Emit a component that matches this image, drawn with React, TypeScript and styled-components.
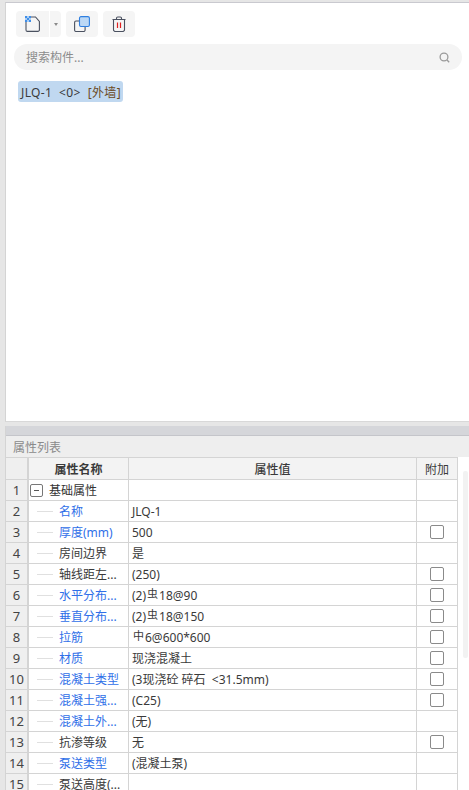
import React from 'react';
import styled, { createGlobalStyle } from 'styled-components';

const GlobalStyle = createGlobalStyle`
  html, body {
    margin: 0;
    padding: 0;
    background: #fff;
    overflow: hidden;
    font-family: "Noto Sans", "Noto Sans CJK SC", sans-serif;
    font-size: 12px;
    color: #333;
  }
`;

const Page = styled.div`
  width: 469px;
  height: 790px;
  overflow: hidden;
  display: flex;
  flex-direction: column;
  background: #e6e6e6;
  padding: 2px 0 0 5px;
  box-sizing: border-box;
`;

const TopPanel = styled.section`
  height: 420px;
  flex: none;
  background: #fff;
  border-top: 1px solid #c9c9cf;
  border-left: 1px solid #d4d4d4;
  border-bottom: 1px solid #d8d8d8;
  padding: 8px 7px 0 8px;
  box-sizing: border-box;
`;

const Toolbar = styled.div`
  display: flex;
  gap: 5px;
  height: 26px;
  margin-left: 2px;
`;

const ToolButton = styled.button`
  width: 32px;
  height: 26px;
  padding: 0;
  border: 0;
  border-radius: 4px;
  background: #f5f5f5;
  display: flex;
  align-items: center;
  justify-content: center;
`;

const SplitButton = styled.div`
  display: flex;
  width: 45px;
  height: 26px;
  border-radius: 4px;
  background: #f5f5f5;
  overflow: hidden;
`;

const SplitMain = styled.div`
  width: 33px;
  display: flex;
  align-items: center;
  justify-content: center;
  border-right: 1px solid #fff;
`;

const SplitArrow = styled.div`
  flex: 1;
  display: flex;
  align-items: center;
  justify-content: center;
`;

const Caret = styled.span`
  width: 0;
  height: 0;
  border-left: 2.5px solid transparent;
  border-right: 2.5px solid transparent;
  border-top: 3px solid #8a8a8a;
`;

const SearchBar = styled.div`
  margin-top: 7px;
  height: 26px;
  width: 448px;
  border-radius: 13px;
  background: #f4f4f4;
  display: flex;
  align-items: center;
  justify-content: space-between;
  padding: 0 12px 0 12px;
  box-sizing: border-box;
  color: #8c8c8c;
`;

const TagRow = styled.div`
  margin-top: 11px;
  margin-left: 4px;
  display: flex;
`;

const Tag = styled.span`
  display: inline-flex;
  align-items: center;
  width: 105px;
  height: 21px;
  padding: 1px 3px 0;
  box-sizing: border-box;
  border-radius: 3px;
  background: #c0d8f0;
  color: #3a3a3a;
  white-space: pre;
  letter-spacing: 0.35px;
`;

const Bracket = styled.span`
  color: #6b4a1e;
`;

const Splitter = styled.div`
  height: 4px;
  flex: none;
`;

const BottomPanel = styled.section`
  flex: 1;
  background: #fff;
  border-left: 1px solid #d4d4d4;
  display: flex;
  flex-direction: column;
  min-height: 0;
`;

const Band = styled.div`
  height: 10px;
  flex: none;
  background: #d5d6da;
  border-bottom: 1px solid #c4c5ca;
  box-sizing: border-box;
`;

const PanelTitle = styled.div`
  height: 21px;
  flex: none;
  background: #eeeeee;
  color: #8a8a8a;
  display: flex;
  align-items: center;
  padding-left: 7px;
`;

const TableWrap = styled.div`
  display: flex;
  flex: 1;
  min-height: 0;
`;

const Table = styled.div`
  width: 452px;
  flex: none;
  display: grid;
  grid-template-columns: 23px 100px 288px 41px;
  grid-template-rows: 22px;
  grid-auto-rows: 21px;
  border-top: 1px solid #d4d4d4;
`;

const Cell = styled.div`
  border-right: 1px solid #d4d4d4;
  border-bottom: 1px solid #d4d4d4;
  box-sizing: border-box;
  display: flex;
  align-items: center;
  white-space: pre;
  overflow: hidden;
  min-width: 0;
`;

const IndexCell = styled(Cell)`
  background: #efefef;
  justify-content: center;
  color: #444;
  border-right-width: 2px;
  font-size: 13px;
`;

const HeadCell = styled(Cell)`
  background: #f3f3f3;
  justify-content: center;
  font-weight: 700;
  color: #3a3a3a;
`;

const ValueHead = styled(HeadCell)`
  font-weight: 500;
`;

const ExtraHead = styled(HeadCell)`
  font-weight: 400;
`;

const NameCell = styled(Cell)<{ $link?: boolean }>`
  padding-left: 8px;
  color: ${(p) => (p.$link ? '#2f6fe8' : '#3a3a3a')};
`;

const TreeLine = styled.span`
  width: 16px;
  height: 1px;
  flex: none;
  background: #e0e0e0;
  margin-right: 6px;
`;

const NameText = styled.span`
  overflow: hidden;
  text-overflow: ellipsis;
`;

const GroupCell = styled(Cell)`
  padding-left: 1px;
  gap: 6px;
`;

const Collapse = styled.span`
  width: 13px;
  height: 13px;
  box-sizing: border-box;
  border: 1px solid #777;
  border-radius: 2px;
  display: flex;
  align-items: center;
  justify-content: center;
  &::before {
    content: '';
    width: 5px;
    height: 1px;
    background: #555;
  }
`;

const ValueCell = styled(Cell)`
  padding-left: 3px;
  color: #3a3a3a;
`;

const SteelMark = styled.span`
  font-size: 11px;
  line-height: 11px;
  margin: 0 1px 4px 1px;
`;

const ExtraCell = styled(Cell)`
  justify-content: center;
`;

const CheckBox = styled.span`
  width: 12px;
  height: 12px;
  border: 1px solid #8a8a8a;
  border-radius: 2px;
`;

const Track = styled.div`
  width: 5px;
  flex: none;
  margin: 14px 0 0 5px;
  background: #f2f2f2;
  height: 187px;
  border-radius: 2px;
`;

type Row = {
  name: string;
  link?: boolean;
  value?: React.ReactNode;
  check?: boolean;
};

const rows: Row[] = [
  { name: '名称', link: true, value: 'JLQ-1' },
  { name: '厚度(mm)', link: true, value: '500', check: true },
  { name: '房间边界', value: '是' },
  { name: '轴线距左...', value: '(250)', check: true },
  { name: '水平分布...', link: true, value: <>(2)<SteelMark>虫</SteelMark>18@90</>, check: true },
  { name: '垂直分布...', link: true, value: <>(2)<SteelMark>虫</SteelMark>18@150</>, check: true },
  { name: '拉筋', link: true, value: <><SteelMark>中</SteelMark>6@600*600</>, check: true },
  { name: '材质', link: true, value: '现浇混凝土', check: true },
  { name: '混凝土类型', link: true, value: '(3现浇砼 碎石  <31.5mm)', check: true },
  { name: '混凝土强...', link: true, value: '(C25)', check: true },
  { name: '混凝土外...', link: true, value: '(无)' },
  { name: '抗渗等级', value: '无', check: true },
  { name: '泵送类型', link: true, value: '(混凝土泵)' },
  { name: '泵送高度(...' },
];

const NewIcon = () => (
  <svg width="16" height="16" viewBox="0 0 16 16" fill="none">
    <path d="M1 5.5v8.4A1.5 1.5 0 0 0 2.5 15.4h10.4a1.5 1.5 0 0 0 1.5-1.5V5.5L10.5 1H6" stroke="#4a5160" strokeWidth="1.1" />
    <path d="M0 0h2v2H0zM4 0h2v2H4zM2 2h2v2H2zM0 4h2v2H0zM4 4h2v2H4z" fill="#3f8ee8" />
    <path d="M2 0h2v2H2zM0 2h2v2H0zM4 2h2v2H4zM2 4h2v2H2z" fill="#a9cdf3" />
  </svg>
);

const CopyIcon = () => (
  <svg width="16" height="16" viewBox="0 0 16 16" fill="none">
    <path d="M5 5H2A1.4 1.4 0 0 0 .6 6.4v7.7A1.4 1.4 0 0 0 2 15.5h7.7a1.4 1.4 0 0 0 1.4-1.4v-3" stroke="#4a5160" strokeWidth="1.1" />
    <rect x="5.5" y="0.6" width="9.9" height="9.9" rx="1.5" fill="#bcd8f5" stroke="#2f7fe0" strokeWidth="1.1" />
  </svg>
);

const TrashIcon = () => (
  <svg width="14" height="16" viewBox="0 0 14 16" fill="none">
    <path d="M.5 3.5h13M4.5 3.5V2.2A1.2 1.2 0 0 1 5.7 1h2.6a1.2 1.2 0 0 1 1.2 1.2v1.3" stroke="#4a5160" strokeWidth="1.1" />
    <path d="M1.5 3.5v10.2a1.8 1.8 0 0 0 1.8 1.8h7.4a1.8 1.8 0 0 0 1.8-1.8V3.5" stroke="#4a5160" strokeWidth="1.1" />
    <path d="M5.5 6.5v5.5M8.5 6.5v5.5" stroke="#e02020" strokeWidth="1.2" />
  </svg>
);

const SearchIcon = () => (
  <svg width="11" height="11" viewBox="0 0 11 11" fill="none">
    <circle cx="5" cy="5" r="3.9" stroke="#9a9a9a" strokeWidth="1.3" />
    <path d="M8 8l2.2 2.2" stroke="#9a9a9a" strokeWidth="1.3" />
  </svg>
);

export default function App() {
  return (
    <Page>
      <GlobalStyle />
      <TopPanel>
        <Toolbar>
          <SplitButton>
            <SplitMain><NewIcon /></SplitMain>
            <SplitArrow><Caret /></SplitArrow>
          </SplitButton>
          <ToolButton><CopyIcon /></ToolButton>
          <ToolButton><TrashIcon /></ToolButton>
        </Toolbar>
        <SearchBar>
          <span>搜索构件...</span>
          <SearchIcon />
        </SearchBar>
        <TagRow>
          <Tag>JLQ-1  &lt;0&gt;  <Bracket>[外墙]</Bracket></Tag>
        </TagRow>
      </TopPanel>
      <Splitter />
      <BottomPanel>
        <Band />
        <PanelTitle>属性列表</PanelTitle>
        <TableWrap>
          <Table>
            <IndexCell />
            <HeadCell>属性名称</HeadCell>
            <ValueHead>属性值</ValueHead>
            <ExtraHead>附加</ExtraHead>

            <IndexCell>1</IndexCell>
            <GroupCell><Collapse />基础属性</GroupCell>
            <ValueCell />
            <ExtraCell />

            {rows.map((row, i) => (
              <React.Fragment key={row.name}>
                <IndexCell>{i + 2}</IndexCell>
                <NameCell $link={row.link}>
                  <TreeLine />
                  <NameText>{row.name}</NameText>
                </NameCell>
                <ValueCell>{row.value}</ValueCell>
                <ExtraCell>{row.check && <CheckBox />}</ExtraCell>
              </React.Fragment>
            ))}
          </Table>
          <Track />
        </TableWrap>
      </BottomPanel>
    </Page>
  );
}
